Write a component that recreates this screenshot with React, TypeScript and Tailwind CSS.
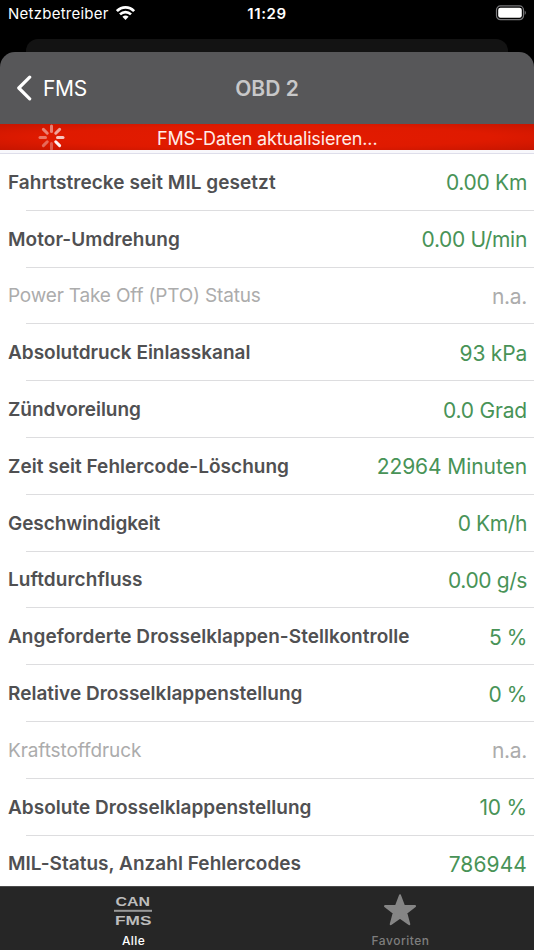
type Row = { label: string; value: string; muted?: boolean; labelTracking: string; valueTracking: string };

const rows: Row[] = [
  { label: 'Fahrtstrecke seit MIL gesetzt', value: '0.00 Km', labelTracking: 'tracking-[0.05px]', valueTracking: 'tracking-[-0.3px]' },
  { label: 'Motor-Umdrehung', value: '0.00 U/min', labelTracking: 'tracking-[0.06px]', valueTracking: 'tracking-[-0.3px]' },
  { label: 'Power Take Off (PTO) Status', value: 'n.a.', muted: true, labelTracking: 'tracking-[-0.17px]', valueTracking: 'tracking-[-0.3px]' },
  { label: 'Absolutdruck Einlasskanal', value: '93 kPa', labelTracking: 'tracking-[-0.01px]', valueTracking: 'tracking-[-0.2px]' },
  { label: 'Zündvoreilung', value: '0.0 Grad', labelTracking: 'tracking-[-0.05px]', valueTracking: 'tracking-[-0.2px]' },
  { label: 'Zeit seit Fehlercode-Löschung', value: '22964 Minuten', labelTracking: 'tracking-[0.03px]', valueTracking: 'tracking-[-0.08px]' },
  { label: 'Geschwindigkeit', value: '0 Km/h', labelTracking: 'tracking-[-0.06px]', valueTracking: 'tracking-[-0.4px]' },
  { label: 'Luftdurchfluss', value: '0.00 g/s', labelTracking: 'tracking-[0.06px]', valueTracking: 'tracking-[-0.4px]' },
  { label: 'Angeforderte Drosselklappen-Stellkontrolle', value: '5 %', labelTracking: 'tracking-[0.05px]', valueTracking: 'tracking-[-0.4px]' },
  { label: 'Relative Drosselklappenstellung', value: '0 %', labelTracking: 'tracking-[0.02px]', valueTracking: 'tracking-[-0.4px]' },
  { label: 'Kraftstoffdruck', value: 'n.a.', muted: true, labelTracking: 'tracking-[-0.08px]', valueTracking: 'tracking-[-0.3px]' },
  { label: 'Absolute Drosselklappenstellung', value: '10 %', labelTracking: 'tracking-[0.02px]', valueTracking: 'tracking-[-0.2px]' },
  { label: 'MIL-Status, Anzahl Fehlercodes', value: '786944', labelTracking: 'tracking-[0.03px]', valueTracking: 'tracking-[0.1px]' },
];

const spokeOpacity = [0.45, 0.6, 0.75, 0.95, 0.3, 0.35, 0.4, 0.45];

function StatusBar() {
  return (
    <div className="grid h-[39px] grid-cols-3 px-2 text-[15px] leading-[27px] text-white">
      <div className="flex gap-[7px]">
        <span className="whitespace-nowrap tracking-[0.25px]">Netzbetreiber</span>
        <svg className="mt-[5px] h-[16px] w-[20px] shrink-0" viewBox="0 0 20 16" fill="none" stroke="white" strokeWidth="2.7">
          <path d="M0.9 6.1C5.8 1.1 13.2 1.1 18.1 6.1" />
          <path d="M4 9.4C7.1 6.4 11.9 6.4 15 9.4" />
          <path d="M6.4 11.7Q9.5 9.1 12.6 11.7L9.5 14.9Z" fill="white" stroke="none" />
        </svg>
      </div>
      <span className="text-center font-semibold tracking-[0.6px]">11:29</span>
      <div className="flex justify-end pt-[5px]">
        <svg className="h-[16px] w-[32px]" viewBox="0 0 32 16">
          <rect x="2.5" y="0.9" width="27" height="13.8" rx="4" fill="none" stroke="#77777a" strokeWidth="1.2" />
          <rect x="4.2" y="2.8" width="23.6" height="10" rx="2.2" fill="white" />
          <path d="M30.7 5.5Q33 7.7 30.7 10Z" fill="#77777a" />
        </svg>
      </div>
    </div>
  );
}

function Spinner() {
  return (
    <svg className="ml-[38px] h-[27px] w-[27px] shrink-0" viewBox="0 0 27 27" stroke="white" strokeWidth="3" strokeLinecap="round">
      {spokeOpacity.map((opacity, i) => (
        <path key={i} d="M13.5 2V7.5" opacity={opacity} transform={`rotate(${i * 45} 13.5 13.5)`} />
      ))}
    </svg>
  );
}

export default function App() {
  return (
    <div className="flex h-[950px] w-[534px] flex-col overflow-hidden bg-black font-['Inter','Liberation_Sans',sans-serif]">
      <StatusBar />
      <div className="mx-[26px] h-[13px] shrink-0 rounded-t-[12px] bg-[#131313]" />
      <div className="flex min-h-0 flex-1 flex-col overflow-hidden rounded-t-[15px] bg-[#575759]">
        <header className="grid h-[72px] shrink-0 grid-cols-3 items-center px-4">
          <div className="flex items-center gap-[10px] text-white">
            <svg className="h-[26px] w-[17px]" viewBox="0 0 17 26" fill="none" stroke="white" strokeWidth="3.2" strokeLinecap="round" strokeLinejoin="round">
              <path d="M13.7 2.2L2.8 13L13.7 23.8" />
            </svg>
            <span className="pt-px text-[21px] tracking-[-0.3px]">FMS</span>
          </div>
          <h1 className="pt-px text-center text-[21px] font-semibold text-[#c8c8c9]">OBD 2</h1>
        </header>
        <div className="flex h-[26px] shrink-0 items-center bg-[radial-gradient(ellipse_at_center,#e31b00_0%,#df1a00_60%,#c61500_100%)]">
          <Spinner />
          <span className="ml-[92px] mt-[4px] whitespace-nowrap text-[18px] leading-[24px] tracking-[-0.16px] text-[#ffece8]">FMS-Daten aktualisieren...</span>
        </div>
        <main className="min-h-0 flex-1 overflow-hidden bg-white">
          <div className="h-[4px] border-b border-[#dedeea] bg-[#f8f8fc]" />
          {rows.map((row) => (
            <div key={row.label} className="flex h-[56.8px] flex-col">
              <div className={`flex flex-1 items-center justify-between whitespace-nowrap pl-2 pr-[7px] pt-[2.5px] ${row.muted ? 'text-[#acacac]' : 'text-[#505052]'}`}>
                <span className={`text-[19px] ${row.labelTracking} ${row.muted ? '' : 'font-semibold'}`}>{row.label}</span>
                <span className={`text-[21px] ${row.valueTracking} ${row.muted ? '' : 'text-[#489357]'}`}>{row.value}</span>
              </div>
              <div className="ml-[26px] h-px bg-[#dddddf]" />
            </div>
          ))}
        </main>
        <nav className="grid h-[64px] shrink-0 grid-cols-2 border-t border-[#4b4b4b] bg-[#262626] text-[12px]">
          <div className="flex flex-col items-center text-white">
            <svg className="mr-px mt-[8px] h-[32px] w-[40px]" viewBox="0 0 40 32" fill="#bdbdbd" fontFamily="Liberation Sans" fontWeight="bold" fontSize="13">
              <text x="2.5" y="11.3" textLength="34.5" lengthAdjust="spacingAndGlyphs">CAN</text>
              <rect x="1" y="14.8" width="38" height="2" fill="#999" />
              <text x="2" y="29.8" textLength="36.5" lengthAdjust="spacingAndGlyphs">FMS</text>
            </svg>
            <span className="mt-[6px] font-medium leading-[16px] tracking-[0.4px]">Alle</span>
          </div>
          <div className="flex flex-col items-center text-[#7e7e7e]">
            <svg className="mr-px mt-[6px] h-[34px] w-[34px]" viewBox="0 0 34 34" fill="#858585" stroke="#858585" strokeWidth="2" strokeLinejoin="round">
              <path d="M17 2.3L20.9 12.7L32 13.1L23.3 20L26.3 31.2L17 24.8L7.7 31.2L10.7 20L2 13.1L13.1 12.7Z" />
            </svg>
            <span className="mt-[6px] font-medium leading-[16px] tracking-[0.5px]">Favoriten</span>
          </div>
        </nav>
      </div>
    </div>
  );
}
